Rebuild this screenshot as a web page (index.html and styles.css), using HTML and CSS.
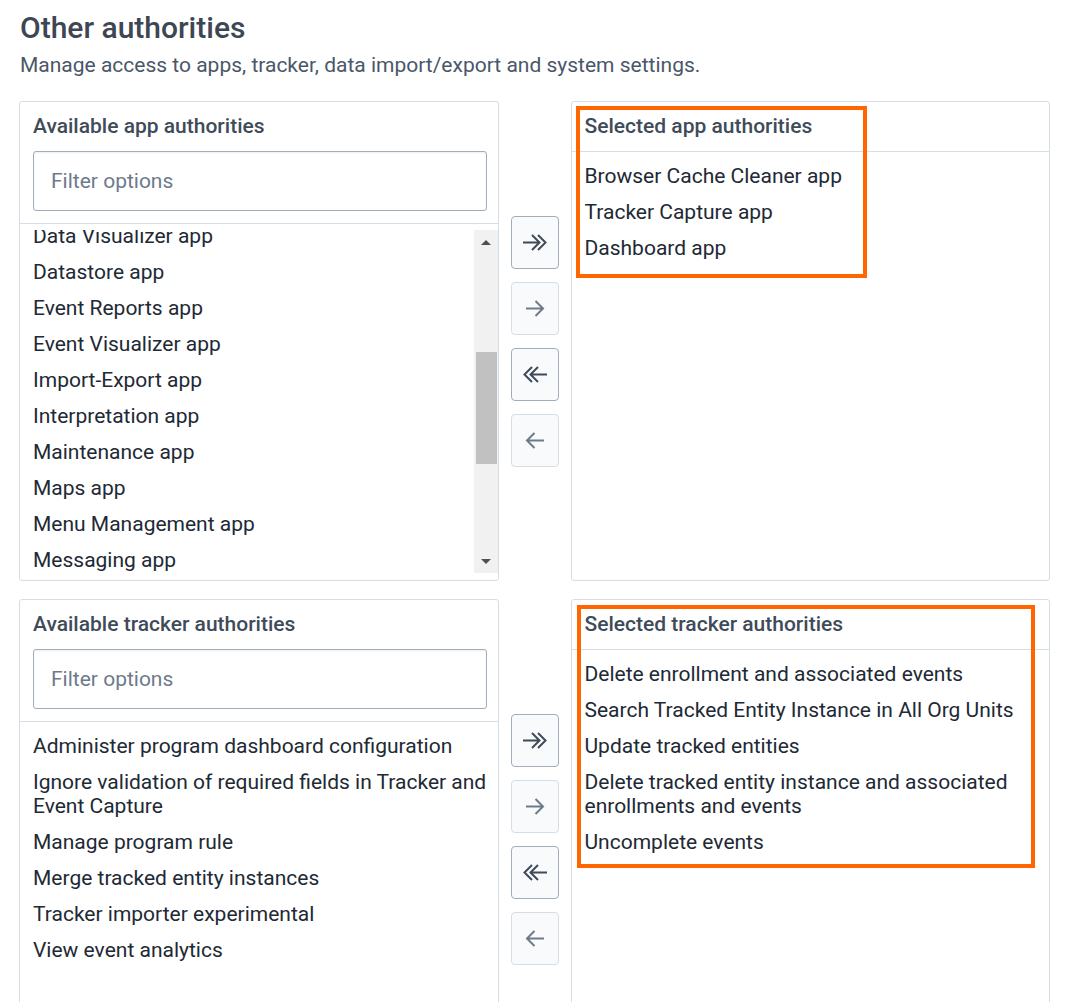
FILE: index.html
```html
<!DOCTYPE html>
<html lang="en">
<head>
<meta charset="utf-8">
<title>Other authorities</title>
<link rel="stylesheet" href="styles.css">
</head>
<body>
<div class="page">
  <h1 class="title">Other authorities</h1>
  <p class="subtitle">Manage access to apps, tracker, data import/export and system settings.</p>

  <section class="transfer">
    <div class="panel">
      <div class="panel-head">
        <div class="panel-title">Available app authorities</div>
        <input class="filter" type="text" placeholder="Filter options">
      </div>
      <div class="list-wrap">
        <div class="list scrolled">
          <ul>
            <li>Data Visualizer app</li>
            <li>Datastore app</li>
            <li>Event Reports app</li>
            <li>Event Visualizer app</li>
            <li>Import-Export app</li>
            <li>Interpretation app</li>
            <li>Maintenance app</li>
            <li>Maps app</li>
            <li>Menu Management app</li>
            <li>Messaging app</li>
          </ul>
        </div>
        <div class="scrollbar">
          <div class="sb-btn sb-up"></div>
          <div class="sb-track"><div class="sb-thumb"></div></div>
          <div class="sb-btn sb-down"></div>
        </div>
      </div>
    </div>

    <div class="actions">
      <button class="btn" type="button" aria-label="Select all">
        <svg class="ico" width="26" height="19" viewBox="0 0 26 19"><path d="M1 9.5H17.5M10 2l7.5 7.5L10 17M16 2l7.5 7.5L16 17" fill="none" stroke="currentColor" stroke-width="2"/></svg>
      </button>
      <button class="btn disabled" type="button" aria-label="Select">
        <svg class="ico" width="26" height="19" viewBox="0 0 26 19"><path d="M4 9.5H21M13.5 2l7.5 7.5L13.5 17" fill="none" stroke="currentColor" stroke-width="2"/></svg>
      </button>
      <button class="btn" type="button" aria-label="Deselect all">
        <svg class="ico flip" width="26" height="19" viewBox="0 0 26 19"><path d="M1 9.5H17.5M10 2l7.5 7.5L10 17M16 2l7.5 7.5L16 17" fill="none" stroke="currentColor" stroke-width="2"/></svg>
      </button>
      <button class="btn disabled" type="button" aria-label="Deselect">
        <svg class="ico flip" width="26" height="19" viewBox="0 0 26 19"><path d="M4 9.5H21M13.5 2l7.5 7.5L13.5 17" fill="none" stroke="currentColor" stroke-width="2"/></svg>
      </button>
    </div>

    <div class="panel">
      <div class="panel-head selected-head">
        <div class="panel-title">Selected app authorities</div>
      </div>
      <div class="list-wrap">
        <div class="list">
          <ul>
            <li>Browser Cache Cleaner app</li>
            <li>Tracker Capture app</li>
            <li>Dashboard app</li>
          </ul>
        </div>
      </div>
      <div class="annot annot-app"></div>
    </div>
  </section>

  <section class="transfer">
    <div class="panel">
      <div class="panel-head">
        <div class="panel-title">Available tracker authorities</div>
        <input class="filter" type="text" placeholder="Filter options">
      </div>
      <div class="list-wrap">
        <div class="list">
          <ul>
            <li>Administer program dashboard configuration</li>
            <li>Ignore validation of required fields in Tracker and Event Capture</li>
            <li>Manage program rule</li>
            <li>Merge tracked entity instances</li>
            <li>Tracker importer experimental</li>
            <li>View event analytics</li>
          </ul>
        </div>
      </div>
    </div>

    <div class="actions">
      <button class="btn" type="button" aria-label="Select all">
        <svg class="ico" width="26" height="19" viewBox="0 0 26 19"><path d="M1 9.5H17.5M10 2l7.5 7.5L10 17M16 2l7.5 7.5L16 17" fill="none" stroke="currentColor" stroke-width="2"/></svg>
      </button>
      <button class="btn disabled" type="button" aria-label="Select">
        <svg class="ico" width="26" height="19" viewBox="0 0 26 19"><path d="M4 9.5H21M13.5 2l7.5 7.5L13.5 17" fill="none" stroke="currentColor" stroke-width="2"/></svg>
      </button>
      <button class="btn" type="button" aria-label="Deselect all">
        <svg class="ico flip" width="26" height="19" viewBox="0 0 26 19"><path d="M1 9.5H17.5M10 2l7.5 7.5L10 17M16 2l7.5 7.5L16 17" fill="none" stroke="currentColor" stroke-width="2"/></svg>
      </button>
      <button class="btn disabled" type="button" aria-label="Deselect">
        <svg class="ico flip" width="26" height="19" viewBox="0 0 26 19"><path d="M4 9.5H21M13.5 2l7.5 7.5L13.5 17" fill="none" stroke="currentColor" stroke-width="2"/></svg>
      </button>
    </div>

    <div class="panel">
      <div class="panel-head selected-head">
        <div class="panel-title">Selected tracker authorities</div>
      </div>
      <div class="list-wrap">
        <div class="list">
          <ul>
            <li>Delete enrollment and associated events</li>
            <li>Search Tracked Entity Instance in All Org Units</li>
            <li>Update tracked entities</li>
            <li>Delete tracked entity instance and associated enrollments and events</li>
            <li>Uncomplete events</li>
          </ul>
        </div>
      </div>
      <div class="annot annot-tracker"></div>
    </div>
  </section>
</div>
</body>
</html>
```

FILE: styles.css
```css
* { box-sizing: border-box; }

body {
  margin: 0;
  background: #ffffff;
  font-family: Roboto, "Noto Sans", "Liberation Sans", sans-serif;
  color: #212934;
}

.page {
  padding: 10px 20px 0 19px;
}

.title {
  margin: 0 0 0 1px;
  font-size: 30px;
  line-height: 36px;
  font-weight: 500;
  color: #3d4653;
}

.subtitle {
  margin: 7px 0 0 1px;
  font-size: 21px;
  line-height: 24px;
  color: #4a5768;
}

.transfer {
  display: flex;
  height: 480px;
  margin-top: 24px;
}

.transfer + .transfer {
  margin-top: 18px;
}

.panel {
  position: relative;
  width: 480px;
  border: 1px solid #d5dde5;
  border-radius: 3px;
  display: flex;
  flex-direction: column;
  background: #fff;
}

.panel-head {
  padding: 12px 11px 12px 13px;
  border-bottom: 1px solid #d5dde5;
}

.selected-head {
  padding-bottom: 13px;
}

.panel-title {
  font-size: 21px;
  line-height: 24px;
  font-weight: 500;
  color: #404b5a;
}

.filter {
  display: block;
  width: 100%;
  height: 60px;
  margin: 13px 0 0;
  padding: 0 12px 0 17px;
  border: 1px solid #a0adba;
  border-radius: 3px;
  background: #fff;
  font-family: inherit;
  font-size: 21px;
  color: #212934;
  box-shadow: inset 0 1px 2px rgba(48, 54, 60, 0.08);
  outline: none;
}

.filter::placeholder {
  color: #6e7a8a;
  opacity: 1;
}

.list-wrap {
  flex: 1;
  min-height: 0;
  display: flex;
  padding: 6px 0 7px;
}

.list {
  flex: 1;
  min-width: 0;
  overflow: hidden;
}

.list ul {
  list-style: none;
  margin: 0;
  padding: 0;
}

.list.scrolled ul {
  margin-top: -12px;
}

.list li {
  padding: 6px 4px 6px 13px;
  font-size: 21px;
  line-height: 24px;
  color: #212934;
}

.scrollbar {
  width: 24px;
  background: #f1f1f1;
  display: flex;
  flex-direction: column;
}

.sb-btn {
  height: 24px;
  display: flex;
  align-items: center;
  justify-content: center;
}

.sb-up::before {
  content: "";
  border-left: 5px solid transparent;
  border-right: 5px solid transparent;
  border-bottom: 5px solid #505050;
}

.sb-down::before {
  content: "";
  border-left: 5px solid transparent;
  border-right: 5px solid transparent;
  border-top: 5px solid #505050;
}

.sb-track {
  flex: 1;
}

.sb-thumb {
  margin: 98px 1px 0 2px;
  height: 112px;
  background: #c1c1c1;
}

.actions {
  width: 72px;
  flex: none;
  display: flex;
  flex-direction: column;
  align-items: center;
  justify-content: center;
  gap: 13px;
}

.btn {
  width: 48px;
  height: 53px;
  padding: 0;
  border: 1px solid #a0adba;
  border-radius: 4px;
  background: #f9fafb;
  color: #404b5a;
  display: flex;
  align-items: center;
  justify-content: center;
  cursor: pointer;
}

.btn.disabled {
  border-color: #d5dde5;
  color: #6e7a8a;
  cursor: default;
}

.ico {
  display: block;
}

.ico.flip {
  transform: scaleX(-1);
}

.annot {
  position: absolute;
  border: 4px solid #ff6600;
  pointer-events: none;
}

.annot-app {
  left: 4px;
  top: 4px;
  width: 291px;
  height: 172px;
}

.annot-tracker {
  left: 5px;
  top: 5px;
  width: 458px;
  height: 263px;
}
```
